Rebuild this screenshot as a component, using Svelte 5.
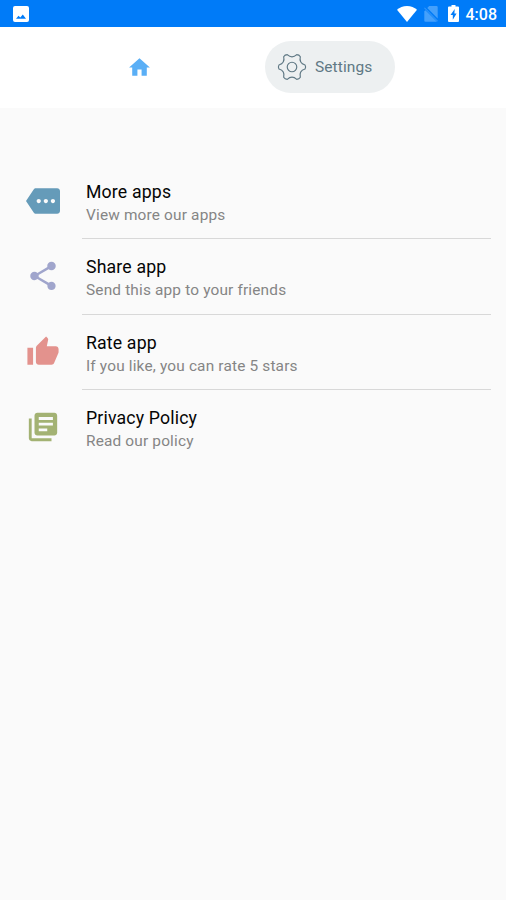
<script lang="ts">
  const items = [
    {
      title: 'More apps',
      text: 'View more our apps',
      color: '#659bb9',
      path: 'M22 3H7c-.69 0-1.23.35-1.59.88L0 12l5.41 8.11c.36.53.97.89 1.66.89H22c1.1 0 2-.9 2-2V5c0-1.1-.9-2-2-2zM9 13.5c-.83 0-1.5-.67-1.5-1.5s.67-1.5 1.5-1.5 1.5.67 1.5 1.5-.67 1.5-1.5 1.5zm5 0c-.83 0-1.5-.67-1.5-1.5s.67-1.5 1.5-1.5 1.5.67 1.5 1.5-.67 1.5-1.5 1.5zm5 0c-.83 0-1.5-.67-1.5-1.5s.67-1.5 1.5-1.5 1.5.67 1.5 1.5-.67 1.5-1.5 1.5z',
    },
    {
      title: 'Share app',
      text: 'Send this app to your friends',
      color: '#a0a5cc',
      path: 'M18 16.08c-.76 0-1.44.3-1.96.77L8.91 12.7c.05-.23.09-.46.09-.7s-.04-.47-.09-.7l7.05-4.11c.54.5 1.25.81 2.04.81 1.66 0 3-1.34 3-3s-1.34-3-3-3-3 1.34-3 3c0 .24.04.47.09.7L8.04 9.81C7.5 9.31 6.79 9 6 9c-1.66 0-3 1.34-3 3s1.34 3 3 3c.79 0 1.5-.31 2.04-.81l7.12 4.16c-.05.21-.08.43-.08.65 0 1.61 1.31 2.92 2.92 2.92s2.92-1.31 2.92-2.92-1.31-2.92-2.92-2.92z',
    },
    {
      title: 'Rate app',
      text: 'If you like, you can rate 5 stars',
      color: '#e3928d',
      path: 'M1 21h4V9H1v12zm22-11c0-1.1-.9-2-2-2h-6.31l.95-4.57.03-.32c0-.41-.17-.79-.44-1.06L14.17 1 7.59 7.59C7.22 7.95 7 8.45 7 9v10c0 1.1.9 2 2 2h9c.83 0 1.54-.5 1.84-1.22l3.02-7.05c.09-.23.14-.47.14-.73v-2z',
    },
    {
      title: 'Privacy Policy',
      text: 'Read our policy',
      color: '#a3b273',
      path: 'M4 6H2v14c0 1.1.9 2 2 2h14v-2H4V6zm16-4H8c-1.1 0-2 .9-2 2v12c0 1.1.9 2 2 2h12c1.1 0 2-.9 2-2V4c0-1.1-.9-2-2-2zm-1 9H9V9h10v2zm-4 4H9v-2h6v2zm4-8H9V5h10v2z',
    },
  ];
</script>

<div class="screen">
  <header class="status">
    <svg class="photo" viewBox="0 0 16 16">
      <path fill="#fff" fill-rule="evenodd" d="M2 0h12a2 2 0 0 1 2 2v12a2 2 0 0 1-2 2H2a2 2 0 0 1-2-2V2a2 2 0 0 1 2-2zM3 12.800h10l-3.200-4.300-2.500 3.100L5.500 9.700z" />
    </svg>
    <div class="system">
      <svg class="wifi" viewBox="0 0 20 16">
        <path fill="#fff" d="M10 16 0 3.700C2.600 1.400 6 0 10 0s7.400 1.400 10 3.700z" />
      </svg>
      <svg class="sim" viewBox="0 0 14 16">
        <path fill="#45a0fb" d="M5.200 0H12.500a1.200 1.200 0 0 1 1.200 1.200v11.300L3.300 2zM1.400 4.200 13 15.800H1.500A1.200 1.200 0 0 1 .3 14.600V5.300z" />
        <path stroke="#45a0fb" d="m.3 1.700 13.400 13.600" />
      </svg>
      <svg class="battery" viewBox="0 0 11 17">
        <path fill="#fff" fill-rule="evenodd" d="M3.500 0h4v1.600H10a1 1 0 0 1 1 1V16a1 1 0 0 1-1 1H1a1 1 0 0 1-1-1V2.600a1 1 0 0 1 1-1h2.500zM6.700 4 2.500 10h2.300v4.700L8.600 8.500H6.400z" />
      </svg>
      <span class="time">4:08</span>
    </div>
  </header>

  <nav>
    <button class="home" aria-label="Home">
      <svg viewBox="0 0 24 24"><path fill="#5aaff6" d="M10 20v-6h4v6h5v-8h3L12 3 2 12h3v8z" /></svg>
    </button>
    <button class="settings">
      <svg viewBox="-15.400 -15.400 30.800 30.800" fill="none" stroke="#607985" stroke-width="1.200" stroke-linejoin="round">
        <path d="M13.400 2.100Q14.600 0 13.400 -2.100C9.200 -3.350 7.500 -6.300 8.560 -10.570Q7.300 -12.650 4.870 -12.700C1.700 -9.650 -1.700 -9.650 -4.870 -12.700Q-7.300 -12.650 -8.560 -10.570C-7.500 -6.300 -9.200 -3.350 -13.400 -2.100Q-14.600 0 -13.400 2.100C-9.200 3.350 -7.500 6.300 -8.560 10.570Q-7.300 12.650 -4.870 12.700C-1.700 9.650 1.700 9.650 4.870 12.700Q7.300 12.650 8.560 10.570C7.500 6.300 9.200 3.350 13.400 2.100Z" />
        <circle r="4.900" />
      </svg>
      <span>Settings</span>
    </button>
  </nav>

  <main>
    {#each items as item}
      <div class="item">
        <svg viewBox="0 0 24 24"><path fill={item.color} d={item.path} /></svg>
        <div class="info">
          <div class="title">{item.title}</div>
          <div class="text">{item.text}</div>
        </div>
      </div>
    {/each}
  </main>
</div>

<style>
  :global(body) {
    background: #fafafa;
  }

  .screen {
    height: 900px;
    overflow: hidden;
    background: #fafafa;
    font-family: Roboto, sans-serif;
  }

  svg {
    display: block;
    flex: none;
  }

  .status {
    display: flex;
    align-items: center;
    justify-content: space-between;
    box-sizing: border-box;
    height: 27px;
    padding: 0 9px 0 13px;
    background: #007bf8;
  }
  .photo { width: 16px; height: 16px; margin-top: 1px; }
  .system { display: flex; align-items: center; }
  .wifi { width: 20px; height: 16px; margin-right: 7px; }
  .sim { width: 14px; height: 16px; margin-right: 10px; }
  .battery { width: 11px; height: 17px; margin-right: 7px; }
  .time {
    color: #fff;
    font-size: 16px;
    font-weight: 500;
    line-height: 20px;
    margin-top: 3px;
  }

  nav {
    display: grid;
    grid-template-columns: 253px 1fr;
    align-items: center;
    box-sizing: border-box;
    height: 81px;
    padding-bottom: 1px;
    background: #fff;
  }
  button {
    display: flex;
    align-items: center;
    border: 0;
    padding: 0;
    background: none;
    font: inherit;
  }
  .home { justify-self: center; margin-left: 25px; }
  .home svg { width: 25px; height: 25px; }
  .settings {
    width: 130px;
    height: 52px;
    margin-left: 12px;
    padding-left: 12px;
    border-radius: 26px;
    background: #edf0f1;
    color: #607985;
    font-size: 15.500px;
    letter-spacing: 0.1px;
  }
  .settings svg { width: 30px; height: 30px; margin-right: 8px; }

  main { padding: 56px 15px 0 26px; }
  .item {
    display: flex;
    height: 75.400px;
  }
  .item svg { width: 34px; height: 34px; margin-top: 20px; }
  .info {
    flex: 1;
    box-sizing: border-box;
    margin-left: 21.500px;
    padding: 17px 0 0 4.500px;
    border-bottom: 1px solid #d8d8d8;
  }
  .item:last-child .info { border-bottom: 0; }
  .title {
    color: #050505;
    font-size: 17.700px;
    line-height: 22px;
    letter-spacing: 0.16px;
  }
  .text {
    margin-top: 1px;
    color: #858585;
    font-size: 15.400px;
    line-height: 22px;
    letter-spacing: 0.17px;
  }
</style>
